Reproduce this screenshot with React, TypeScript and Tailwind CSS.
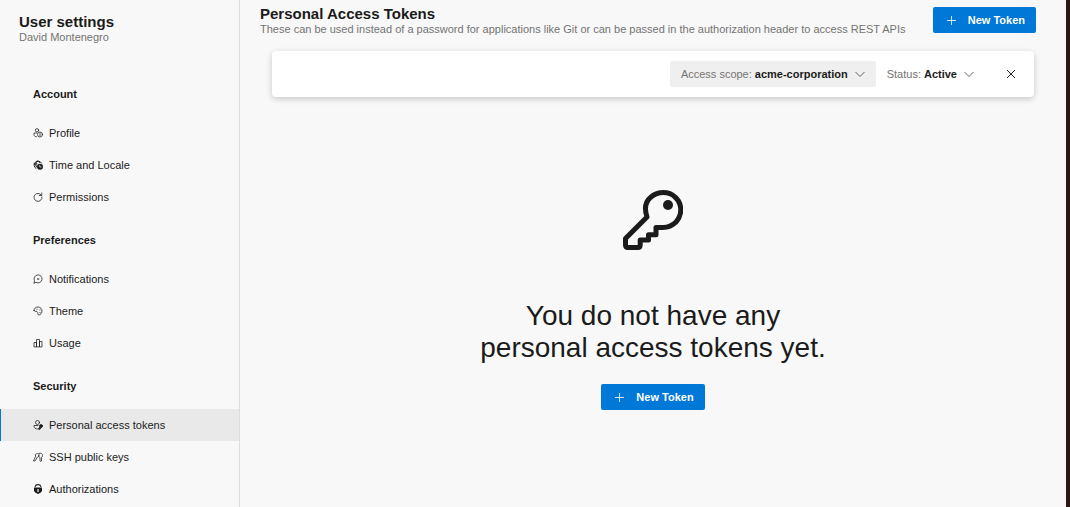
import type { ReactNode } from "react";

type NavItem = { label: string; icon: ReactNode; active?: boolean };
type NavGroup = { title: string; items: NavItem[] };

function Glyph({ children }: { children: ReactNode }) {
  return (
    <svg
      className="size-[10px] shrink-0"
      viewBox="0 0 20 20"
      fill="none"
      stroke="currentColor"
      strokeWidth="1.5"
      strokeLinecap="round"
      strokeLinejoin="round"
      aria-hidden="true"
    >
      {children}
    </svg>
  );
}

const groups: NavGroup[] = [
  {
    title: "Account",
    items: [
      {
        label: "Profile",
        icon: (
          <Glyph>
            <circle cx="8" cy="4.5" r="3.3" />
            <path d="M8 10H2v3c0 3 2 4.500 5 4.500" />
            <circle cx="14" cy="13" r="5" />
            <path d="M14 10.500v5" />
          </Glyph>
        ),
      },
      {
        label: "Time and Locale",
        icon: (
          <Glyph>
            <path d="M17 6A8 8 0 1 0 6 17M2 8h6M8 2c-3 4-3 9-1 12M11 2c1 1 2 2 2 3" strokeWidth="2" />
            <circle cx="14" cy="13.5" r="6" fill="currentColor" stroke="none" />
            <path d="M13.500 10.500v3.500h3" stroke="#f8f8f8" strokeWidth="1.400" />
          </Glyph>
        ),
      },
      {
        label: "Permissions",
        icon: (
          <Glyph>
            <path d="M16.500 6A8 8 0 1 0 18 10M17.500 2v5h-5" />
          </Glyph>
        ),
      },
    ],
  },
  {
    title: "Preferences",
    items: [
      {
        label: "Notifications",
        icon: (
          <Glyph>
            <path d="M2 18l1-4.500A8 8 0 1 1 6.500 17z" />
            <path d="M10 9.500v1M9 10h3" />
          </Glyph>
        ),
      },
      {
        label: "Theme",
        icon: (
          <Glyph>
            <path d="M2 9C2 5 5 2 10 2c5 0 8 4 8 8s-3 8-6 8c-4 0-1-5-4-7-2-1-5 1-6-2z" />
            <path d="M8 6.500h.1M14 8h.1M14 13h.1" strokeWidth="2" />
          </Glyph>
        ),
      },
      {
        label: "Usage",
        icon: (
          <Glyph>
            <path d="M2 17V9h5v8zM7 17V3h6v14zM13 17V7h5v10z" />
          </Glyph>
        ),
      },
    ],
  },
  {
    title: "Security",
    items: [
      {
        label: "Personal access tokens",
        active: true,
        icon: (
          <Glyph>
            <circle cx="9" cy="5" r="4" />
            <path d="M10 11H2v1c0 4 3 6 7 6" />
            <circle cx="16" cy="12" r="3" fill="currentColor" />
            <path d="M14 14l-3 3v1.500h3L16 16" fill="currentColor" />
          </Glyph>
        ),
      },
      {
        label: "SSH public keys",
        icon: (
          <Glyph>
            <path d="M5 5c2-3 6-3 7 0s-1 5-3 5l-5 8H1l4-9zM12 3c4-2 7 0 7 4 0 2-1 3-2 4v7l-2 1-1-2v-6c-2-1-3-2-3-4" />
          </Glyph>
        ),
      },
      {
        label: "Authorizations",
        icon: (
          <Glyph>
            <path d="M4.500 5C5.500 0 14.500 0 15.500 5" strokeWidth="2.400" />
            <path d="M2 7h16v6c0 3-4 5-8 7-4-2-8-4-8-7z" fill="currentColor" stroke="none" />
            <path d="M10 11v4" stroke="#f8f8f8" strokeWidth="2.500" />
          </Glyph>
        ),
      },
    ],
  },
];

function Sidebar() {
  return (
    <aside className="w-[240px] shrink-0 border-r border-[#dddddd]">
      <header className="h-[67px] pt-[14px] pl-[19px]">
        <h1 className="text-[15px] leading-4 font-bold">User settings</h1>
        <p className="text-[11px] leading-[14px] text-[#747474]">David Montenegro</p>
      </header>
      <nav aria-label="User settings">
        {groups.map((group) => (
          <section key={group.title}>
            <h2 className="pt-[19px] pb-[15px] pl-[33px] text-[11px] leading-4 font-bold">{group.title}</h2>
            <ul>
              {group.items.map((item) => (
                <li key={item.label}>
                  <a
                    href="#"
                    aria-current={item.active ? "page" : undefined}
                    className={
                      item.active
                        ? "flex h-8 items-center gap-[6px] border-l border-[#0078d4] bg-[#e9e9e9] pl-8 text-[11px]"
                        : "flex h-8 items-center gap-[6px] border-l border-transparent pl-8 text-[11px]"
                    }
                  >
                    {item.icon}
                    {item.label}
                  </a>
                </li>
              ))}
            </ul>
          </section>
        ))}
      </nav>
    </aside>
  );
}

function NewTokenButton() {
  return (
    <button
      type="button"
      className="flex h-[26px] shrink-0 items-center gap-[11px] rounded-[2px] bg-[#0078d7] pr-[11px] pl-[13px] text-[11px] font-bold text-white"
    >
      <svg className="size-[11px]" viewBox="0 0 11 11" fill="none" stroke="currentColor" strokeWidth="0.8" aria-hidden="true">
        <path d="M5.500 1v9M1 5.500h9" />
      </svg>
      New Token
    </button>
  );
}

function Filter({ id, label, value, filled }: { id: string; label: string; value: string; filled?: boolean }) {
  return (
    <div
      className={
        filled
          ? "flex h-[26px] items-center rounded-[2px] bg-[#efefef] px-[11px] text-[11px]"
          : "flex h-[26px] items-center rounded-[2px] px-[11px] text-[11px]"
      }
    >
      <label htmlFor={id} className="mr-[3px] text-[#747474]">
        {label}
      </label>
      <select id={id} className="field-sizing-content appearance-none bg-transparent font-bold">
        <option>{value}</option>
      </select>
      <svg
        className="pointer-events-none ml-[7px] size-[10px]"
        viewBox="0 0 10 10"
        fill="none"
        stroke="#555555"
        strokeWidth="0.9"
        aria-hidden="true"
      >
        <path d="M0.500 3l4.500 4.500L9.500 3" />
      </svg>
    </div>
  );
}

export default function App() {
  return (
    <div className="flex min-h-screen border-r-4 border-[#2f1614] bg-[#f8f8f8] font-['Liberation_Sans',Arial,sans-serif] text-[#1b1b1b]">
      <Sidebar />
      <main className="min-w-0 flex-1 pr-[30px] pl-5">
        <header className="flex items-start justify-between pt-[6px]">
          <div>
            <h2 className="text-[15px] leading-4 font-bold">Personal Access Tokens</h2>
            <p className="text-[11px] leading-[14px] text-[#747474]">
              These can be used instead of a password for applications like Git or can be passed in the authorization
              header to access REST APIs
            </p>
          </div>
          <div className="pt-px">
            <NewTokenButton />
          </div>
        </header>

        <div className="mt-[15px] mr-[2px] ml-3 flex h-[46px] items-center justify-end rounded-[4px] bg-white pr-[17px] shadow-[0_2px_6px_rgba(0,0,0,0.2)]">
          <Filter id="scope" label="Access scope:" value="acme-corporation" filled />
          <Filter id="status" label="Status:" value="Active" />
          <button type="button" aria-label="Clear filters" className="ml-5 p-px">
            <svg className="size-[10px]" viewBox="0 0 10 10" fill="none" stroke="#222222" strokeWidth="1" aria-hidden="true">
              <path d="M1 1l8 8M9 1l-8 8" />
            </svg>
          </button>
        </div>

        <section className="flex flex-col items-center pt-[93px] pl-[10px]">
          <svg
            className="size-[60px]"
            viewBox="0 0 60 60"
            fill="none"
            stroke="currentColor"
            strokeWidth="5"
            strokeLinejoin="round"
            aria-hidden="true"
          >
            <path d="M24 27C21 18 23 11 28 7C35 1 46 1 52 7C59 13 60 24 53 32C49 36 45 37.500 40 37.500H33V44.800H25.500V50H17.200V55C17.200 56.500 16.500 57.500 15 57.500H5C3.500 57.500 2.500 56.500 2.500 55V48.500Z" />
            <circle cx="45" cy="15" r="5" fill="currentColor" stroke="none" />
          </svg>
          <p className="mt-[50px] text-center text-[28px] leading-8">
            You do not have any
            <br />
            personal access tokens yet.
          </p>
          <div className="mt-5">
            <NewTokenButton />
          </div>
        </section>
      </main>
    </div>
  );
}
